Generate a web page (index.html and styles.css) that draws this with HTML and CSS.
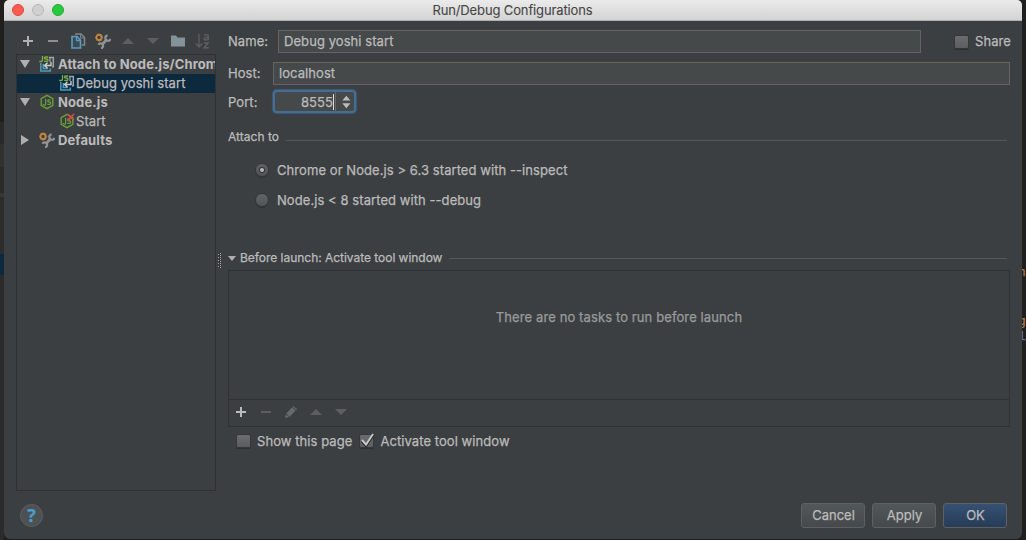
FILE: index.html
```html
<!DOCTYPE html>
<html lang="en">
<head>
<meta charset="utf-8">
<title>Run/Debug Configurations</title>
<link rel="stylesheet" href="styles.css">
</head>
<body>
<svg class="defs" width="0" height="0" aria-hidden="true">
  <symbol id="plus" viewBox="0 0 16 16"><path d="M8 3v10M3 8h10" stroke="currentColor" stroke-width="2" fill="none"/></symbol>
  <symbol id="minus" viewBox="0 0 16 16"><path d="M3 8h10" stroke="currentColor" stroke-width="2"/></symbol>
  <symbol id="up" viewBox="0 0 16 16"><path d="M2 11l6-6 6 6z" fill="currentColor"/></symbol>
  <symbol id="down" viewBox="0 0 16 16"><path d="M2 5h12l-6 6z" fill="currentColor"/></symbol>
  <symbol id="tools" viewBox="0 0 16 16">
    <path d="M7 11.500l5-5" stroke="#8f9394" stroke-width="2.800"/>
    <path d="M12.600 2.400a2.700 2.700 0 1 0 3 3.400M3.400 11.700a2.500 2.500 0 1 1 2.600 3.700" fill="none" stroke="#8f9394" stroke-width="2.200"/>
    <circle cx="4" cy="4.500" r="2.700" fill="#3c3f41" stroke="#c78b45" stroke-width="1.900"/>
    <path d="M4 .4v1.400M4 7.200v1.500M0 4.500h1M7 4.500h1.200M1.200 1.700l.8.8M6 6.500l.9.900M1.200 7.300l.8-.8M6 2.500l.9-.8" stroke="#a9713a" stroke-width="1.200"/>
  </symbol>
  <symbol id="attach" viewBox="0 0 16 16">
    <path d="M10 1.500h4.300v9.300H13" fill="none" stroke="#9da3a7" stroke-width="1.500"/>
    <path d="M11 2v4" stroke="#9da3a7" stroke-width="1.200"/>
    <path d="M1.800 7v8h9.500v-2.500M4.300 8v4.500h4.500" fill="none" stroke="#4f9abb" stroke-width="1.500"/>
    <path d="M12 6v3.500H5.500M8.500 6.700L5.500 9.500l3 2.800" fill="none" stroke="#c9ced0" stroke-width="1.400"/>
    <path d="M3.500 0v4.200q0 1.300-1.400 1.300H.3M9.200 1H6.500q-1 0-1 1t1 1h1.200q1.300 0 1.300 1.200t-1.300 1.200H5.200" fill="none" stroke="#79b040" stroke-width="1.300"/>
  </symbol>
  <symbol id="node" viewBox="0 0 16 16">
    <path d="M8 1.300l5.800 3.300v6.800L8 14.700l-5.800-3.300V4.600z" fill="none" stroke="#699f38" stroke-width="1.400"/>
    <path d="M6.600 4.800v5.400q0 1-1 1-1.300 0-1.300-1.200M11.500 5.900H9.800q-1.100 0-1.100 1t1 1h.8q1.200 0 1.200 1.200t-1.200 1.200H8.400" fill="none" stroke="#699f38" stroke-width="1.200"/>
  </symbol>
</svg>

<div class="desktop">
  <div class="backdrop backdrop-left"><i class="band upper"></i><i class="band active"></i></div>
  <main class="window">
    <header class="titlebar">
      <div class="lights"><i class="close"></i><i class="minimize"></i><i class="expand"></i></div>
      <h1>Run/Debug Configurations</h1>
    </header>

    <div class="content">
      <aside class="sidebar">
        <div class="toolbar">
          <svg><use href="#plus"/></svg>
          <svg><use href="#minus"/></svg>
          <svg viewBox="0 0 16 16"><path d="M6 2V1h5l3.500 3.500V12H12" fill="none" stroke="#7d8588" stroke-width="1.600"/><path d="M10.500 1v4h4" fill="none" stroke="#7d8588"/><path d="M2 3.500h5L10.500 7v8H2z" fill="#3a4b55" stroke="#5d9ac0" stroke-width="1.600"/><path d="M6.500 3.500v4h4" fill="none" stroke="#5d9ac0" stroke-width="1.300"/></svg>
          <svg><use href="#tools"/></svg>
          <svg class="dim"><use href="#up"/></svg>
          <svg class="dim"><use href="#down"/></svg>
          <svg viewBox="0 0 16 16"><path d="M1 2.500h5l1.500 2H15v9H1z" fill="#84929a"/></svg>
          <svg class="dim" viewBox="0 0 16 16"><path d="M4 1v12.500M.8 10.500l3.200 3.500 3.200-3.500" fill="none" stroke="currentColor" stroke-width="1.300"/><path d="M9.300 2.600q.5-1 2-1 2 0 2 1.800v3.800M13.300 4.300q-4.200-.2-4.200 1.500 0 1.200 1.500 1.200 2.200 0 2.700-1.800M9 10h4.300l-4.300 4.800h4.700" fill="none" stroke="currentColor" stroke-width="1.400"/></svg>
        </div>
        <div class="tree">
          <div class="node-row group"><i class="open"></i><svg><use href="#attach"/></svg><span>Attach to Node.js/Chrom</span></div>
          <div class="node-row child selected"><svg><use href="#attach"/></svg><span>Debug yoshi start</span></div>
          <div class="node-row group"><i class="open"></i><svg><use href="#node"/></svg><span>Node.js</span></div>
          <div class="node-row child"><svg viewBox="0 0 16 16"><use href="#node"/><path d="M8.500 1l6.500 6.500m0-6.500l-6.500 6.500" stroke="#d94b3f" stroke-width="1.700"/></svg><span>Start</span></div>
          <div class="node-row group"><i class="closed"></i><svg><use href="#tools"/></svg><span>Defaults</span></div>
        </div>
      </aside>
      <div class="splitter"><svg viewBox="0 0 4 16"><path d="M3.500 0v16" stroke="#b0b0b0" stroke-dasharray="1 1"/><path d="M1.500 1v15" stroke="#a0a0a0" stroke-dasharray="1 2"/><path d="M2.500 0v16" stroke="#262829" stroke-dasharray="1 1"/></svg></div>

      <section class="form">
        <div class="field name-row"><label>Name:</label><div class="input">Debug yoshi start</div><div class="check share"><i></i><span>Share</span></div></div>
        <div class="field host-row"><label>Host:</label><div class="input">localhost</div></div>
        <div class="field port-row"><label>Port:</label><div class="spinner"><span>8555</span><svg viewBox="0 0 20 20"><path d="M7 9l4.500-5.500L16 9zM7 12h9l-4.500 5.500z" fill="#bbb"/></svg></div></div>
        <div class="separator attach-title"><span>Attach to</span><hr></div>
        <div class="radio first"><i class="on"></i><span>Chrome or Node.js &gt; 6.3 started with --inspect</span></div>
        <div class="radio second"><i></i><span>Node.js &lt; 8 started with --debug</span></div>
        <div class="separator launch-title"><i class="open"></i><span>Before launch: Activate tool window</span><hr></div>
        <div class="tasks">
          <div class="empty">There are no tasks to run before launch</div>
          <div class="task-tools">
            <svg><use href="#plus"/></svg>
            <svg class="dim"><use href="#minus"/></svg>
            <svg viewBox="0 0 16 16"><path d="M2 14l1-4 7-8 4 3-7.500 8z" fill="#676a6c"/><path d="M9 3l4 3.500M3 10l3.500 3" stroke="#3c3f41" fill="none"/></svg>
            <svg class="dim"><use href="#up"/></svg>
            <svg class="dim"><use href="#down"/></svg>
          </div>
        </div>
        <div class="options">
          <div class="check"><i></i><span>Show this page</span></div>
          <div class="check"><i><svg viewBox="0 0 16 16"><path d="M3 8l4 4.500L14 2" fill="none" stroke="#282828" stroke-width="3"/><path d="M3 7l4 4.500L14 1" fill="none" stroke="#c8c8c8" stroke-width="2"/></svg></i><span>Activate tool window</span></div>
        </div>
      </section>
    </div>

    <footer>
      <div class="help">?</div>
      <div class="buttons"><div class="button">Cancel</div><div class="button">Apply</div><div class="button primary">OK</div></div>
    </footer>
  </main>
  <div class="backdrop backdrop-right"><span class="one">h</span><span class="two">g</span><span class="three">l</span></div>
</div>
</body>
</html>
```

FILE: styles.css
```css
* { box-sizing: border-box; }
body { margin: 0; font-family: Inter, "Liberation Sans", sans-serif; font-size: 13px; line-height: 16px; letter-spacing: .07px; -webkit-text-stroke: .25px; color: #bbb; background: #1e1e1f; overflow: hidden; white-space: nowrap; }
.defs { display: none; }
svg { display: block; width: 16px; height: 16px; flex: none; overflow: visible; }
i { display: block; flex: none; }
.desktop { display: flex; width: 1026px; height: 540px; }
.backdrop { width: 4px; flex: none; }
.backdrop-left { background: linear-gradient(#211f1e 0 122px, #29292a 122px 144px, #303132 144px 167px, #292a2b 167px 193px, #343638 193px 197px, #2b2c2d 197px 254px, #2b2b2b 254px); }
.band.upper { height: 254px; }
.band.active { height: 21px; background: #0d293e; }
.backdrop-right { background: #1f1f20; overflow: hidden; font: 13px/16px "Liberation Mono", monospace; }
.backdrop-right span { display: block; margin-left: -4px; color: #ad7b52; }
.backdrop-right .one { padding-top: 265px; }
.backdrop-right .two { padding-top: 33px; }
.backdrop-right .three { margin-top: -1px; color: #6379b8; }
.window { width: 1018px; height: 539px; display: flex; flex-direction: column; background: #3c3f41; border-radius: 5px 5px 6px 6px; overflow: hidden; }

.titlebar { height: 21px; flex: none; display: grid; grid-template-columns: 100px 1fr 101px; background: linear-gradient(#ebebeb, #d3d3d3); border-bottom: 1px solid #b0b0b0; }
.titlebar h1 { margin: 0; font-size: 13px; font-weight: 400; line-height: 20px; text-align: center; color: #454545; letter-spacing: -.13px; -webkit-text-stroke: .1px; }
.lights { display: flex; gap: 8px; padding: 4px 0 0 8px; }
.lights i { width: 12px; height: 12px; border-radius: 50%; }
.close { background: #ff5b53; border: 1px solid #e1453e; }
.minimize { background: #d0d0d0; border: 1px solid #b6b6b6; }
.expand { background: #28c940; border: 1px solid #1dac30; }

.content { display: flex; height: 470px; padding-left: 12px; }
.sidebar { width: 200px; flex: none; }
.toolbar { height: 33px; display: flex; gap: 9px; padding: 12px 0 0 4px; color: #afb1b3; }
.toolbar svg + svg { color: #8d8f90; }
.toolbar svg.dim, .task-tools .dim { color: #5c5e60; }
.tree { height: 437px; border: 1px solid #303132; overflow: hidden; }
.node-row { height: 19px; display: flex; align-items: flex-start; padding-top: 1px; }
.node-row svg { margin-right: 3px; }
.group { font-weight: 700; padding-left: 2px; letter-spacing: .12px; -webkit-text-stroke: 0; }
.group > i { margin: 4px 9px 0 0; width: 11px; display: flex; justify-content: center; }
.group > i.closed { margin-top: 3px; }
.child { padding-left: 42px; }
.child svg { margin-right: 1px; }
.selected { background: #0d293e; }
i.open::before { content: ""; display: block; border: 5px solid transparent; border-top: 8px solid #afafaf; border-bottom: 0; }
i.closed::before { content: ""; display: block; border: 5px solid transparent; border-left: 8px solid #afafaf; border-right: 0; }
.splitter { width: 12px; flex: none; padding: 232px 0 0 1px; }
.splitter svg { width: 4px; }

.form { width: 782px; flex: none; padding-top: 9px; }
.field { display: flex; align-items: center; height: 23px; }
.field label { flex: none; padding-bottom: 1px; }
.input { flex: none; height: 23px; border: 1px solid #646464; background: #45494a; padding: 2px 5px; }
.name-row label { width: 50px; }
.name-row .input { width: 643px; }
.share { margin-left: 33px; }
.check.share span { padding-bottom: 2px; }
.host-row { margin-top: 9px; }
.host-row label, .port-row label { width: 45px; }
.host-row .input { width: 737px; }
.port-row { margin-top: 5px; }
.port-row label { padding: 0; }
.spinner { width: 83px; height: 23px; border: 2px solid #466d94; border-radius: 4px; background: #45494a; box-shadow: 0 0 1px 1px #3d5a78; display: flex; align-items: center; }
.spinner span { width: 60px; text-align: right; border-right: 1px solid #ddd; line-height: 16px; }
.spinner svg { width: 19px; height: 19px; margin-left: 1px; border-left: 1px solid #65686a; }
.separator { display: flex; align-items: center; font-size: 12px; height: 16px; letter-spacing: .03px; }
.separator hr { flex: 1; height: 1px; margin: 7px 3px 0 7px; border: 0; background: #555759; }
.attach-title { margin-top: 16px; }
.radio { display: flex; align-items: center; height: 16px; padding-left: 27px; gap: 8px; }
.radio i { width: 14px; height: 14px; border-radius: 50%; border: 1px solid #35383a; background: linear-gradient(#616568, #515557); box-shadow: 0 1px 0 #303234; }
.radio i.on::before { content: ""; display: block; width: 4px; height: 4px; margin: 4px; border-radius: 50%; background: #bbb; box-shadow: 0 0 1px 1px #303030; }
.radio.first { margin-top: 17px; }
.radio.second { margin-top: 14px; }
.launch-title { margin-top: 42px; letter-spacing: -.03px; }
.launch-title hr { margin-top: 0; }
.launch-title i { width: 12px; }
.launch-title i.open::before { width: 0; border-width: 5px 4px 0; }
.tasks { height: 157px; margin-top: 4px; border: 1px solid #303132; display: flex; flex-direction: column; }
.empty { height: 128px; padding-top: 38px; text-align: center; color: #999b9c; letter-spacing: .11px; }
.task-tools { height: 27px; border-top: 1px solid #303132; display: flex; gap: 9px; align-items: flex-start; padding: 4px 0 0 4px; }
.options { display: flex; gap: 7px; padding: 6px 0 0 8px; }
.check { display: flex; gap: 6px; align-items: center; height: 16px; }
.check i { width: 15px; height: 14px; border: 1px solid #35383a; border-radius: 2px; background: linear-gradient(#6a6c6d, #5b5d5e); box-shadow: 0 1px 0 #2f3031; }
.check i svg { margin: -2px 0 0 -1px; }

footer { flex: 1; display: flex; justify-content: space-between; padding: 12px 15px 0 16px; }
.help { width: 23px; height: 23px; margin-top: 1px; border: 1px solid #5c6062; border-radius: 50%; background: #4c5153; color: #4d9ccb; font: 700 18px/21px "Open Sans", sans-serif; text-align: center; }
.buttons { display: flex; gap: 7px; }
.button { width: 64px; height: 25px; border: 1px solid #5d6163; border-radius: 3px; background: linear-gradient(#525759, #45494b); text-align: center; line-height: 23px; padding-left: 1px; letter-spacing: 0; }
.primary { background: linear-gradient(#365173, #263c56); }
```
